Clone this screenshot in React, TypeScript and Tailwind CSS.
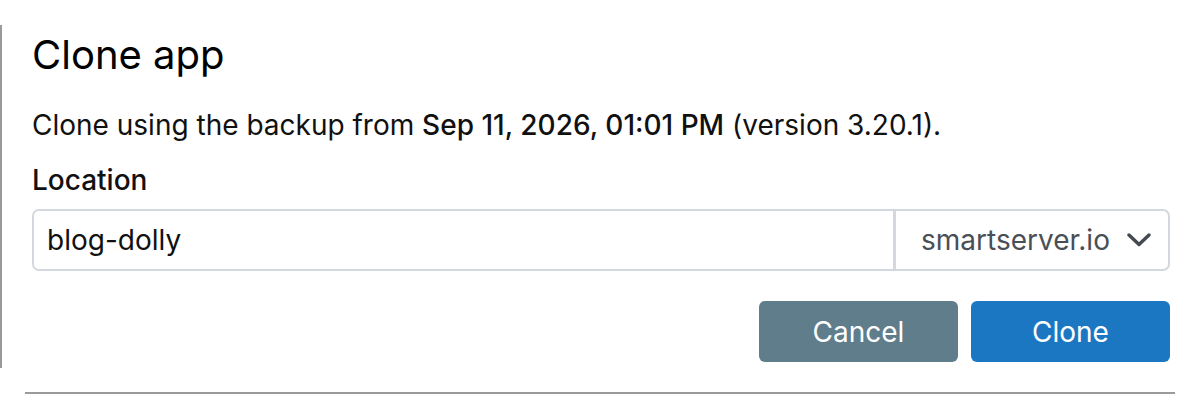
export default function App() {
  return (
    <div className="w-[1200px] h-[394px] bg-white flex flex-col font-['Inter',sans-serif] text-[#111]">
      <div className="flex flex-1">
        {/* left edge of the dialog frame */}
        <div className="w-[2px] mt-[25px] h-[343px] bg-[#9a9a9a]" />
        <div className="flex-1 pl-[30px] pr-[30px] pt-[27px]">
          <h2 className="text-[40px] leading-[56px] font-normal text-black">Clone app</h2>
          <p className="mt-[22px] text-[28px] leading-[40px]">
            Clone using the backup from <span className="font-medium">Sep 11, 2026, 01:01 PM</span> (version 3.20.1).
          </p>
          <label className="block mt-[15px] text-[28px] leading-[40px] font-medium">Location</label>
          <div className="mt-[9px] flex h-[62px] border-2 border-[#d3d8de] rounded-[7px] overflow-hidden">
            <input
              defaultValue="blog-dolly"
              className="flex-1 min-w-0 px-[13px] text-[28px] text-[#111] outline-none bg-white"
            />
            <div className="w-[3px] bg-[#d3d8de]" />
            <button className="w-[272px] flex items-center gap-[17px] pl-[25px] text-[28px] text-[#4a4f57]">
              <span>smartserver.io</span>
              <svg width="24" height="14" viewBox="0 0 24 14" fill="none" className="text-[#444a52]">
                <polyline points="2,2 12,11.5 22,2" stroke="currentColor" strokeWidth="3.4" strokeLinecap="round" strokeLinejoin="round" />
              </svg>
            </button>
          </div>
          <div className="mt-[30px] flex justify-end gap-[13px]">
            <button className="w-[199px] h-[61px] rounded-[6px] bg-[#607d8b] text-white text-[28px]">Cancel</button>
            <button className="w-[199px] h-[61px] rounded-[6px] bg-[#1c77c3] text-white text-[28px]">Clone</button>
          </div>
        </div>
      </div>
      <div className="ml-[25px] w-[1150px] h-[2px] bg-[#9a9a9a]" />
    </div>
  );
}
